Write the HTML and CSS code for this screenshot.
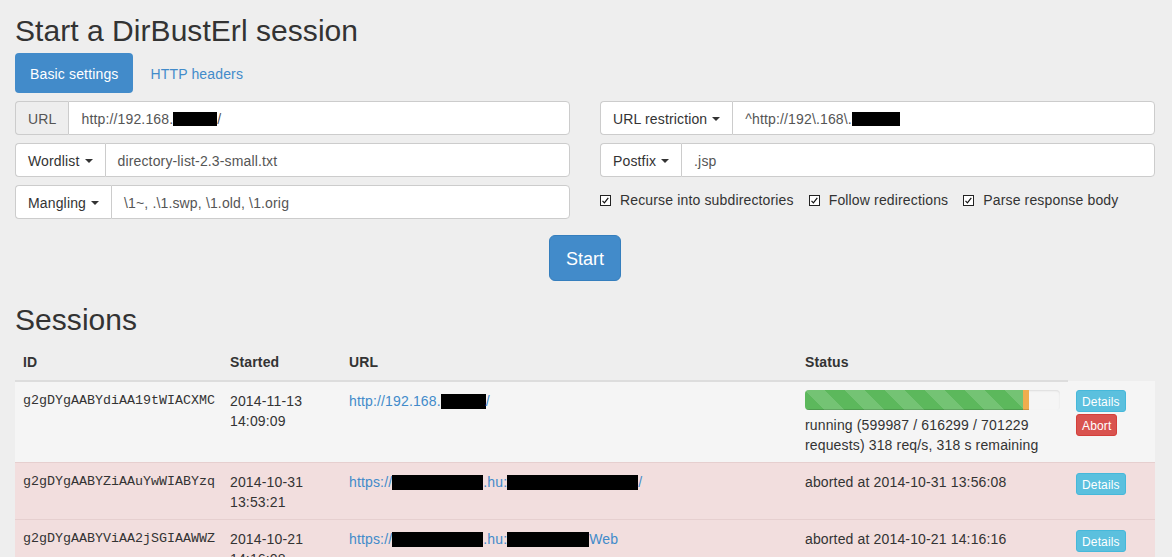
FILE: index.html
```html
<!DOCTYPE html>
<html>
<head>
<meta charset="utf-8">
<title>DirBustErl</title>
<link rel="stylesheet" href="styles.css">
</head>
<body>
<div class="container">
  <h1 class="title">Start a DirBustErl session</h1>
  <ul class="nav-pills">
    <li class="pill active"><a href="#">Basic settings</a></li>
    <li class="pill"><a href="#">HTTP headers</a></li>
  </ul>

  <form class="settings">
    <div class="col">
      <div class="input-group">
        <span class="addon">URL</span>
        <div class="field">http://192.168.<span class="redact r44"></span>/</div>
      </div>
      <div class="input-group">
        <span class="dd-btn">Wordlist <span class="caret"></span></span>
        <div class="field">directory-list-2.3-small.txt</div>
      </div>
      <div class="input-group">
        <span class="dd-btn">Mangling <span class="caret"></span></span>
        <div class="field">\1~, .\1.swp, \1.old, \1.orig</div>
      </div>
    </div>
    <div class="col">
      <div class="input-group">
        <span class="dd-btn">URL restriction <span class="caret"></span></span>
        <div class="field">^http://192\.168\.<span class="redact r48"></span></div>
      </div>
      <div class="input-group">
        <span class="dd-btn">Postfix <span class="caret"></span></span>
        <div class="field">.jsp</div>
      </div>
      <div class="checks">
        <label class="check"><svg class="cb" width="11" height="11" viewBox="0 0 11 11"><rect x="0.5" y="0.5" width="10" height="10" fill="#fff" stroke="#222"/><path d="M2.5 5.8 L4.4 7.8 L8.3 2.8" fill="none" stroke="#111" stroke-width="1.2"/></svg>Recurse into subdirectories</label>
        <label class="check"><svg class="cb" width="11" height="11" viewBox="0 0 11 11"><rect x="0.5" y="0.5" width="10" height="10" fill="#fff" stroke="#222"/><path d="M2.5 5.8 L4.4 7.8 L8.3 2.8" fill="none" stroke="#111" stroke-width="1.2"/></svg>Follow redirections</label>
        <label class="check"><svg class="cb" width="11" height="11" viewBox="0 0 11 11"><rect x="0.5" y="0.5" width="10" height="10" fill="#fff" stroke="#222"/><path d="M2.5 5.8 L4.4 7.8 L8.3 2.8" fill="none" stroke="#111" stroke-width="1.2"/></svg>Parse response body</label>
      </div>
    </div>
  </form>

  <div class="start-row">
    <button class="btn-start" type="button">Start</button>
  </div>

  <h2 class="title">Sessions</h2>
  <table class="sessions">
    <colgroup>
      <col class="c-id"><col class="c-started"><col class="c-url"><col class="c-status"><col class="c-actions">
    </colgroup>
    <thead>
      <tr>
        <th>ID</th>
        <th>Started</th>
        <th>URL</th>
        <th>Status</th>
        <th class="blank"></th>
      </tr>
    </thead>
    <tbody>
      <tr class="running">
        <td class="mono">g2gDYgAABYdiAA19tWIACXMC</td>
        <td>2014-11-13 14:09:09</td>
        <td><a href="#" class="link">http://192.168.<span class="redact r45"></span>/</a></td>
        <td>
          <div class="progress">
            <div class="bar bar-success" style="width:85.56%"></div>
            <div class="bar bar-warning" style="width:2.33%"></div>
          </div>
          <div class="status-text">running (599987 / 616299 / 701229 requests) 318 req/s, 318 s remaining</div>
        </td>
        <td>
          <div class="btn-stack first">
            <a href="#" class="btn-xs info">Details</a>
            <a href="#" class="btn-xs danger">Abort</a>
          </div>
        </td>
      </tr>
      <tr class="aborted">
        <td class="mono">g2gDYgAABYZiAAuYwWIABYzq</td>
        <td>2014-10-31 13:53:21</td>
        <td><a href="#" class="link">https://<span class="redact r91"></span>.hu:<span class="redact r131"></span>/</a></td>
        <td>aborted at 2014-10-31 13:56:08</td>
        <td><div class="btn-stack"><a href="#" class="btn-xs info">Details</a></div></td>
      </tr>
      <tr class="aborted">
        <td class="mono">g2gDYgAABYViAA2jSGIAAWWZ</td>
        <td>2014-10-21 14:16:08</td>
        <td><a href="#" class="link">https://<span class="redact r91"></span>.hu:<span class="redact r82"></span>Web</a></td>
        <td>aborted at 2014-10-21 14:16:16</td>
        <td><div class="btn-stack"><a href="#" class="btn-xs info">Details</a></div></td>
      </tr>
    </tbody>
  </table>
</div>
</body>
</html>
```

FILE: styles.css
```css
html {
  overflow: hidden;
}

body {
  margin: 0;
  background: #eeeeee;
  color: #333333;
  font-family: "Liberation Sans", Arial, sans-serif;
  font-size: 14px;
  line-height: 20px;
  letter-spacing: 0.15px;
}

.container {
  width: 1140px;
  margin: 0 15px;
}

.title {
  font-size: 30px;
  font-weight: 500;
  line-height: 33px;
  color: #333333;
  letter-spacing: 0.05px;
}

h1.title {
  margin: 14px 0 6px;
}

h2.title {
  margin: 22px 0 8px;
}

/* nav pills */
.nav-pills {
  list-style: none;
  margin: 0;
  padding: 0;
  display: flex;
  gap: 2px;
}

.pill a {
  display: block;
  padding: 11px 15px 9px;
  border-radius: 4px;
  color: #428bca;
  text-decoration: none;
}

.pill.active a {
  background: #428bca;
  color: #ffffff;
}

/* settings form */
.settings {
  margin-top: 8px;
  display: grid;
  grid-template-columns: 555px 555px;
  column-gap: 30px;
}

.col {
  display: flex;
  flex-direction: column;
  gap: 8px;
}

.input-group {
  display: flex;
  height: 34px;
}

.addon,
.dd-btn {
  display: flex;
  align-items: center;
  padding: 2px 12px 0;
  border: 1px solid #cccccc;
  border-right: 0;
  border-radius: 4px 0 0 4px;
  white-space: nowrap;
}

.addon {
  background: #eeeeee;
  color: #555555;
}

.dd-btn {
  background: #ffffff;
  color: #333333;
}

.caret {
  display: inline-block;
  width: 0;
  height: 0;
  margin-left: 5px;
  border-top: 4px solid #333333;
  border-left: 4px solid transparent;
  border-right: 4px solid transparent;
}

.field {
  flex: 1;
  display: flex;
  align-items: center;
  padding: 2px 12px 0;
  background: #ffffff;
  border: 1px solid #cccccc;
  border-radius: 0 4px 4px 0;
  color: #555555;
  white-space: nowrap;
}

.redact {
  display: inline-block;
  height: 15px;
  background: #000000;
  vertical-align: -3px;
}

.field .redact {
  height: 14px;
}

.r44 { width: 44px; }
.r45 { width: 45px; }
.r48 { width: 48px; }
.r82 { width: 82px; }
.r91 { width: 91px; }
.r131 { width: 131px; }

.checks {
  height: 30px;
  display: flex;
  align-items: center;
  gap: 15px;
}

.check {
  display: flex;
  align-items: center;
  color: #333333;
}

.cb {
  margin-right: 9px;
  flex: none;
}

/* start button */
.start-row {
  margin-top: 16px;
  display: flex;
  justify-content: center;
}

.btn-start {
  font-family: inherit;
  font-size: 18px;
  line-height: 24px;
  padding: 11px 16px 9px;
  border-radius: 6px;
  border: 1px solid #357ebd;
  background: #428bca;
  color: #ffffff;
}

/* sessions table */
.sessions {
  width: 1140px;
  border-collapse: collapse;
  table-layout: fixed;
}

.c-id { width: 207px; }
.c-started { width: 119px; }
.c-url { width: 456px; }
.c-status { width: 271px; }
.c-actions { width: 87px; }

.sessions th {
  text-align: left;
  font-weight: bold;
  padding: 8px 8px 8px;
  border-bottom: 2px solid #dddddd;
  vertical-align: bottom;
}

.sessions th.blank {
  border-bottom: 0;
}

.sessions td {
  padding: 9px 8px 7px;
  vertical-align: top;
  border-top: 1px solid #e6cfcf;
}

.sessions tbody tr:first-child td {
  border-top: 0;
}

.sessions tr.running td {
  background: #f5f5f5;
}

.sessions tr.aborted td {
  background: #f2dede;
}

.mono {
  font-family: "Liberation Mono", "Courier New", monospace;
  font-size: 13.33px;
  letter-spacing: 0;
  white-space: nowrap;
}

.link {
  color: #428bca;
  text-decoration: none;
  white-space: nowrap;
}

.progress {
  display: flex;
  height: 20px;
  margin-top: -1px;
  margin-bottom: 5px;
  background: #f5f5f5;
  border-radius: 4px;
  overflow: hidden;
  box-shadow: inset 0 1px 2px rgba(0, 0, 0, 0.1);
}

.bar {
  height: 100%;
  box-shadow: inset 0 -1px 0 rgba(0, 0, 0, 0.15);
}

.bar-success {
  background-color: #5cb85c;
  background-image: linear-gradient(45deg, rgba(255, 255, 255, 0.15) 25%, transparent 25%, transparent 50%, rgba(255, 255, 255, 0.15) 50%, rgba(255, 255, 255, 0.15) 75%, transparent 75%, transparent);
  background-size: 40px 40px;
}

.bar-warning {
  background-color: #f0ad4e;
}

.btn-stack {
  display: flex;
  flex-direction: column;
  align-items: flex-start;
  gap: 2px;
  padding-top: 1px;
}

.btn-stack.first {
  padding-top: 0;
}

.btn-xs {
  display: block;
  padding: 2px 5px 0;
  font-size: 12px;
  line-height: 18px;
  border-radius: 3px;
  border: 1px solid transparent;
  color: #ffffff;
  text-decoration: none;
  white-space: nowrap;
}

.btn-xs.info {
  background: #5bc0de;
  border-color: #46b8da;
}

.btn-xs.danger {
  background: #d9534f;
  border-color: #d43f3a;
}
```
